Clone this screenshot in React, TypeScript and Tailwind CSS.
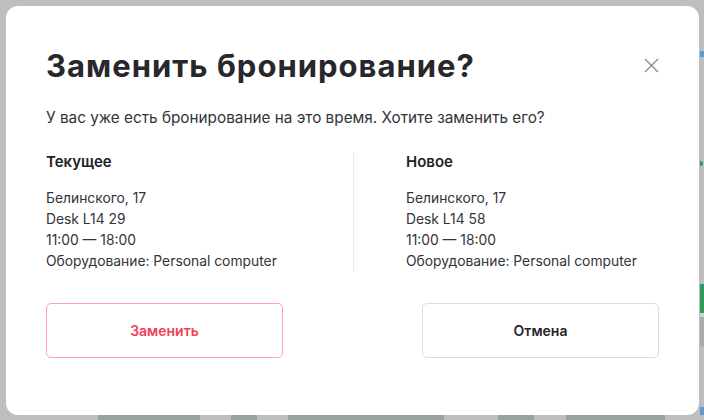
import React from "react";

const font = { fontFamily: "Inter, 'Liberation Sans', sans-serif" };

const Booking = ({ title, desk }: { title: string; desk: string }) => (
  <div>
    <h3 className="text-[15px] leading-[20px] font-semibold text-[#222226]">{title}</h3>
    <div className="mt-[16px] text-[13.85px] leading-[21px] text-[#333338]">
      <p>Белинского, 17</p>
      <p>{desk}</p>
      <p>11:00 — 18:00</p>
      <p>Оборудование: Personal computer</p>
    </div>
  </div>
);

const App = () => {
  return (
    <div className="w-[704px] h-[420px] bg-[#bdbebf] flex flex-col overflow-hidden" style={font}>
      <div className="flex h-[415px]">
        <div className="ml-[6px] mt-[6px] w-[693px] h-[409px] bg-white rounded-[12px] relative px-[40px] pt-[42px]">
          <h2 className="text-[31px] leading-[36px] font-bold text-[#27272c] tracking-[1px]">
            Заменить бронирование?
          </h2>
          <button className="absolute right-[40px] top-[52px] w-[15px] h-[15px] text-[#8c8c8c]">
            <svg viewBox="0 0 15 15" width="15" height="15" fill="none" stroke="currentColor" strokeWidth="1.4">
              <path d="M1 1L14 14M14 1L1 14" />
            </svg>
          </button>
          <p className="mt-[22px] text-[15.3px] leading-[24px] text-[#333338]">
            У вас уже есть бронирование на это время. Хотите заменить его?
          </p>
          <div className="mt-[22px] grid grid-cols-[307px_1fr]">
            <Booking title="Текущее" desk="Desk L14 29" />
            <div className="border-l border-[#ececec] pl-[52px]">
              <Booking title="Новое" desk="Desk L14 58" />
            </div>
          </div>
          <div className="mt-[31px] flex justify-between">
            <button className="w-[237px] h-[55px] rounded-[5px] border border-[#ffa2aa] text-[#f43f57] text-[14px] font-semibold">
              Заменить
            </button>
            <button className="w-[237px] h-[55px] rounded-[5px] border border-[#dcdcdc] text-[#26262b] text-[14px] font-semibold">
              Отмена
            </button>
          </div>
        </div>
        <div className="ml-[1px] flex-1 flex flex-col">
          <div className="h-[51px]" />
          <div className="h-[6px] bg-[#5b9bd5]" />
          <div className="h-[104px]" />
          <div className="h-[5px] w-[3px] bg-[#2e9b5e] rounded-r" />
          <div className="h-[118px]" />
          <div className="h-[29px] bg-[#2f9a5c]" />
          <div className="h-[4px] bg-[#d0d0d0]" />
          <div className="h-[30px] bg-[#a9acac]" />
          <div className="flex-1" />
          <div className="h-[8px] bg-[#5b9bd5]" />
        </div>
      </div>
      <div className="flex-1 flex">
        <div className="w-[98px]" />
        <div className="w-[102px] bg-[#9aa1a1]" />
        <div className="w-[31px]" />
        <div className="w-[26px] bg-[#9aa1a1]" />
        <div className="w-[31px]" />
        <div className="w-[156px] bg-[#9aa1a1]" />
        <div className="w-[54px]" />
        <div className="w-[36px] bg-[#9aa1a1]" />
        <div className="w-[32px]" />
        <div className="w-[99px] bg-[#9aa1a1]" />
      </div>
    </div>
  );
};

export default App;
